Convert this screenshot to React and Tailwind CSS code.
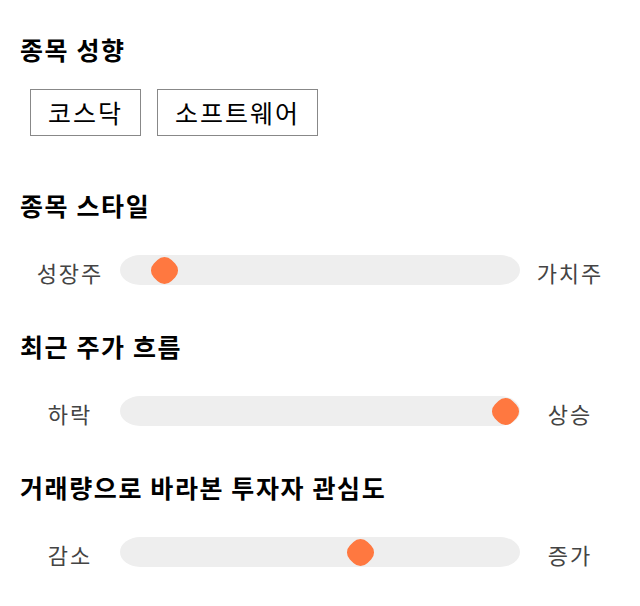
import React from 'react';

const font = { fontFamily: '"Noto Sans CJK KR", "Noto Sans", sans-serif' };

const sliders = [
  { title: '종목 스타일', left: '성장주', right: '가치주', value: 8 },
  { title: '최근 주가 흐름', left: '하락', right: '상승', value: 100 },
  { title: '거래량으로 바라본 투자자 관심도', left: '감소', right: '증가', value: 61 },
];

const SliderRow = ({ left, right, value }) => (
  <div className="flex items-center mt-[32px]">
    <div className="w-[100px] text-center text-[22px] leading-[30px] tracking-[2px] text-[#444] pt-[4px]">{left}</div>
    <div className="relative flex-1 h-[30px] bg-[#eeeeee] rounded-[20px_/_15px]">
      {/* thumb */}
      <div
        className="absolute top-0 w-[29px] h-[30px] flex items-center justify-center"
        style={{ left: `calc((100% - 29px) * ${value / 100})` }}
      >
        <div className="w-[25px] h-[25px] rotate-45 rounded-[10px] bg-[#ff7840]" />
      </div>
    </div>
    <div className="w-[100px] text-center text-[22px] leading-[30px] tracking-[2px] text-[#444] pt-[4px]">{right}</div>
  </div>
);

export default function App() {
  return (
    <div className="w-[640px] h-[606px] bg-white px-5 pt-[33px]" style={font}>
      <h2 className="text-[25px] leading-[32px] tracking-[1.6px] font-bold text-black">종목 성향</h2>
      <div className="flex gap-4 ml-[10px] mt-[24px]">
        {['코스닥', '소프트웨어'].map((t) => (
          <div key={t} className="border border-[#888] px-[17px] h-[47px] flex items-center text-[25px] tracking-[2px] text-black">
            {t}
          </div>
        ))}
      </div>

      {sliders.map((s, i) => (
        <div key={s.title} className={i === 0 ? 'mt-[53px]' : 'mt-[43px]'}>
          <h2 className="text-[25px] leading-[32px] tracking-[1.6px] font-bold text-black">{s.title}</h2>
          <SliderRow left={s.left} right={s.right} value={s.value} />
        </div>
      ))}
    </div>
  );
}
